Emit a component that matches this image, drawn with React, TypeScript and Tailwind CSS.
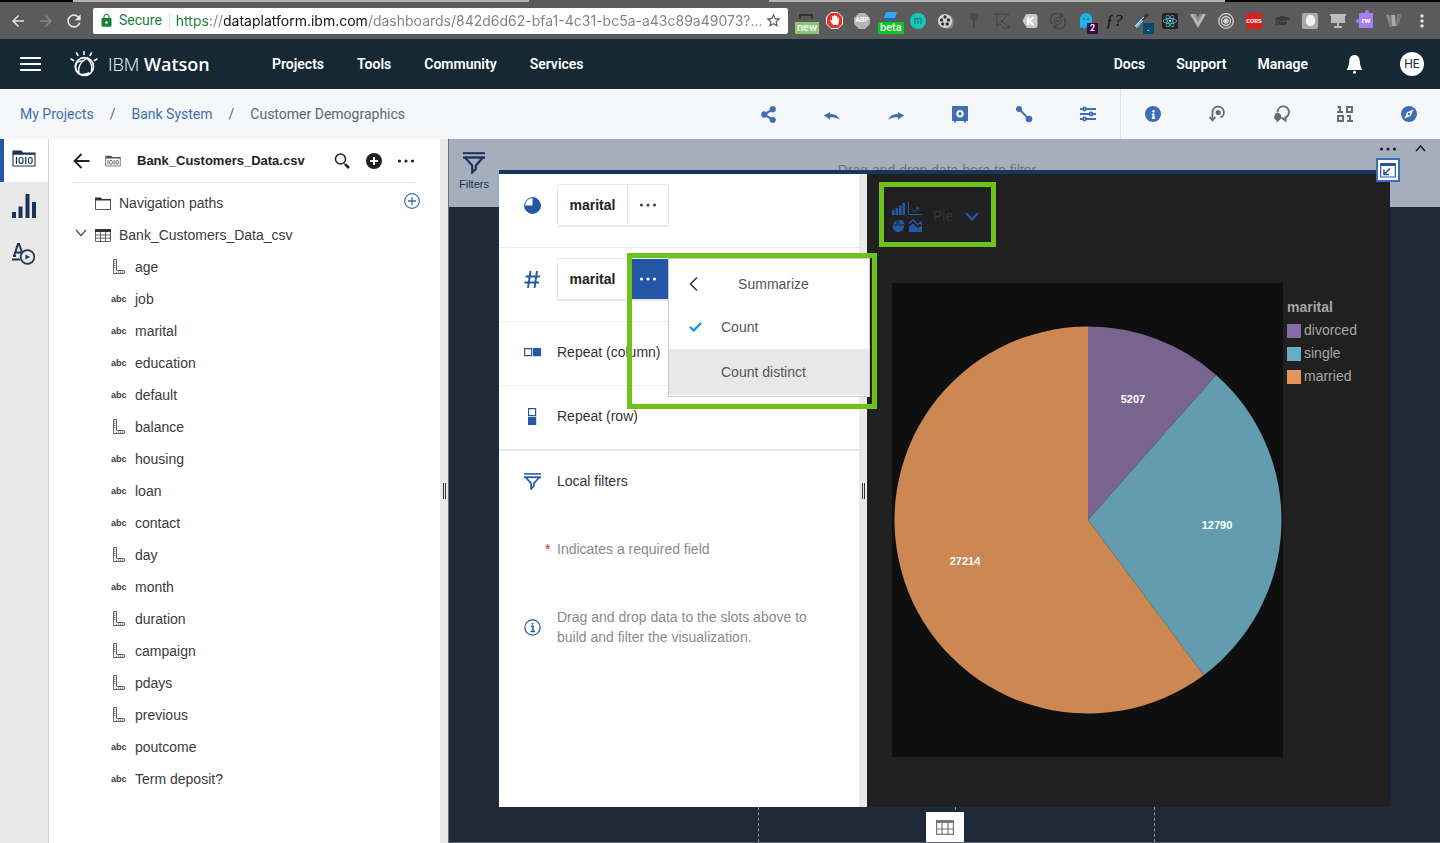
import React from "react";
import {
  FaReact,
  FaHandPaper,
  FaGhost,
  FaGraduationCap,
  FaShareAlt,
  FaInfo,
} from "react-icons/fa";
import { MdArrowBack, MdArrowForward, MdRefresh, MdLock, MdStarBorder, MdMoreVert } from "react-icons/md";

const SANS = "font-['Liberation_Sans',Arial,sans-serif]";

function Dots({ className = "" }: { className?: string }) {
  return (
    <svg width="18" height="4" viewBox="0 0 18 4" fill="currentColor" className={className} aria-hidden="true">
      <circle cx="2.5" cy="2" r="1.6" />
      <circle cx="9" cy="2" r="1.6" />
      <circle cx="15.5" cy="2" r="1.6" />
    </svg>
  );
}

/* ---------- Browser bar ---------- */

function Badge({ children, className }: { children: React.ReactNode; className: string }) {
  return (
    <span className={`absolute font-['Roboto',sans-serif] font-medium leading-none text-white ${className}`}>{children}</span>
  );
}

const extensions: { name: string; icon: React.ReactNode }[] = [
  {
    name: "Capture",
    icon: (
      <>
        <svg width="18" height="16" viewBox="0 0 18 16" fill="none" className="-mt-1">
          <path d="M1 4V1h3M14 1h3v3" stroke="#3f8f3a" />
          <path d="M3 8V4h12v4" stroke="#333" strokeWidth="2" />
        </svg>
        <Badge className="top-[20px] left-[3px] bg-[#8cc672] px-0.5 pb-px text-[11px]">new</Badge>
      </>
    ),
  },
  {
    name: "AdBlock",
    icon: (
      <svg width="17" height="17" viewBox="0 0 17 17">
        <path d="M5 .5h7L16.500 5v7L12 16.500H5L.5 12V5z" fill="#e2352c" stroke="#eee" />
        <svg x="3.500" y="3" width="10" height="11"><FaHandPaper size={10} color="#fff" /></svg>
      </svg>
    ),
  },
  {
    name: "Adblock Plus",
    icon: (
      <span className="relative flex size-4 items-center justify-center font-['Roboto',sans-serif] text-[7px] font-bold text-white">
        <svg width="16" height="16" viewBox="0 0 16 16" className="absolute inset-0"><path d="M5 0h6l5 5v6l-5 5H5l-5-5V5z" fill="#b5b5b5" /></svg>
        <span className="relative">ABP</span>
      </span>
    ),
  },
  {
    name: "Page tools",
    icon: (
      <>
        <svg width="16" height="12" viewBox="0 0 16 12" className="-mt-2">
          <path d="M4 1h11l-2 6H2z" fill="#35a6f2" />
          <path d="M2 7h11l-1 3H3z" fill="#1f6fb5" />
        </svg>
        <Badge className="top-[20px] left-0.5 bg-[#0ac41f] px-0.5 pb-px text-[11px]">beta</Badge>
      </>
    ),
  },
  {
    name: "Momentum",
    icon: (
      <span className="flex size-4 items-center justify-center rounded-full bg-[#15c7b8] text-[10px] leading-none text-[#0b6f68]">m</span>
    ),
  },
  {
    name: "Film",
    icon: (
      <svg width="18" height="18" viewBox="0 0 18 18">
        <ellipse cx="11" cy="10" rx="6" ry="7" fill="#888" />
        <circle cx="8" cy="9" r="7" fill="#d6d6d6" />
        <g fill="#333">
          <circle cx="8" cy="5" r="1.700" />
          <circle cx="11.500" cy="8" r="1.700" />
          <circle cx="10.300" cy="12" r="1.700" />
          <circle cx="5.700" cy="12" r="1.700" />
          <circle cx="4.500" cy="8" r="1.700" />
        </g>
      </svg>
    ),
  },
  {
    name: "Pin",
    icon: (
      <svg width="16" height="18" viewBox="0 0 16 18">
        <circle cx="8" cy="5" r="4" fill="#494949" />
        <path d="M8 8v8" stroke="#494949" strokeWidth="2" />
      </svg>
    ),
  },
  {
    name: "Kaspersky",
    icon: (
      <svg width="18" height="18" viewBox="0 0 18 18" fill="none" stroke="#434343">
        <path d="M1 2h15L5 13M4 2v12M8 8l7 7M6 11l5 5h5v-3" />
      </svg>
    ),
  },
  {
    name: "Keep",
    icon: (
      <svg width="16" height="16" viewBox="0 0 16 16">
        <path d="M4 1h9a2.500 2.500 0 0 1 2.500 2.500v9A2.500 2.500 0 0 1 13 15H5L.5 8z" fill="#c9c9c9" />
        <path d="M6 4v8M11.500 4L7 8l4.500 4" stroke="#fff" strokeWidth="2" fill="none" />
      </svg>
    ),
  },
  {
    name: "Reload",
    icon: (
      <svg width="16" height="16" viewBox="0 0 16 16" fill="none" stroke="#444">
        <path d="M2 11A6.500 6.500 0 0 1 12 2.500M14 5a6.500 6.500 0 0 1-10 8.500M12 .5v3H9M4 15.500v-3h3" strokeWidth="1.500" />
        <circle cx="8" cy="8" r="3.500" />
        <circle cx="8" cy="8" r="1" />
      </svg>
    ),
  },
  {
    name: "Ghostery",
    icon: (
      <>
        <FaGhost size={16} color="#19b3f0" />
        <Badge className="top-[21px] left-[15px] bg-[#3f0a45] px-[3px] py-px text-[9px]">2</Badge>
      </>
    ),
  },
  {
    name: "Font finder",
    icon: <span className="font-['Liberation_Serif',serif] text-[17px] leading-none text-[#111] italic">ƒ?</span>,
  },
  {
    name: "Color picker",
    icon: (
      <>
        <svg width="16" height="16" viewBox="0 0 16 16">
          <path d="M2 14L9 6" stroke="#6cc5ef" strokeWidth="3" />
          <path d="M8 7l6-6" stroke="#2f3a40" strokeWidth="3" />
          <path d="M1 13L10 4" stroke="#ddd" />
        </svg>
        <Badge className="top-[21px] left-[15px] bg-[#054a6d] px-1 py-px text-[9px]">.</Badge>
      </>
    ),
  },
  {
    name: "React developer tools",
    icon: (
      <span className="flex size-4 items-center justify-center rounded-xs bg-[#222]">
        <FaReact size={14} color="#62d3f3" />
      </span>
    ),
  },
  {
    name: "Vue developer tools",
    icon: (
      <svg width="16" height="14" viewBox="0 0 16 14">
        <path d="M0 0h6l2 4 2-4h6L8 14z" fill="#b5b5b5" />
        <path d="M3.500 0H6l2 4 2-4h2.500L8 8z" fill="#8b8b8b" />
      </svg>
    ),
  },
  {
    name: "Target",
    icon: (
      <svg width="16" height="16" viewBox="0 0 16 16" fill="none" stroke="#d0d0d0">
        <circle cx="8" cy="8" r="7.300" strokeWidth="1.300" />
        <circle cx="8" cy="8" r="4.500" strokeWidth="1.300" />
        <circle cx="8" cy="8" r="2.300" fill="#d0d0d0" />
      </svg>
    ),
  },
  {
    name: "CORS",
    icon: (
      <span className="flex size-4 items-center justify-center rounded-xs bg-[#d6211c] font-['Roboto',sans-serif] text-[6px] font-bold text-white">
        CORS
      </span>
    ),
  },
  { name: "Academy", icon: <FaGraduationCap size={15} color="#3d3931" /> },
  {
    name: "Pearl",
    icon: (
      <span className="flex size-4 items-center justify-center rounded-xs bg-[#aaa]">
        <span className="h-[11px] w-[9px] rounded-full bg-[#f2f2f2]" />
      </span>
    ),
  },
  {
    name: "Presenter",
    icon: (
      <svg width="16" height="16" viewBox="0 0 16 16" fill="#bcbcbc">
        <path d="M0 1h16v2H0zM1 3h14v7H1zM7 10h2v3h3v2H4v-2h3z" />
      </svg>
    ),
  },
  {
    name: "RW",
    icon: (
      <span className="relative flex h-[15px] w-3.5 items-center justify-center bg-[#a87cf8] font-['Roboto',sans-serif] text-[8px] font-bold text-white">
        <span className="absolute -top-[3px] left-1.5 size-1 rounded-full bg-[#a87cf8]" />
        <span className="absolute top-1.5 -left-[3px] size-1 rounded-full bg-[#a87cf8]" />
        rw
      </span>
    ),
  },
  {
    name: "Web archive",
    icon: (
      <svg width="16" height="14" viewBox="0 0 16 14">
        <path d="M0 1h4l2 12H4z" fill="#888" />
        <path d="M5 1h4l1 11H6z" fill="#aaa" />
        <path d="M11 0h5l-4 12h-2z" fill="#7b7b7b" />
      </svg>
    ),
  },
];

const urlText = "https://dataplatform.ibm.com/dashboards/842d6d62-bfa1-4c31-bc5a-a43c89a49073?...";

function BrowserBar() {
  return (
    <div className="bg-[#5b5b5b]">
      <div className="flex h-0.5">
        <div className="w-[73px] bg-black" />
        <div className="flex-1 bg-[#b5b5b5]" />
        <div className="w-60 bg-[#5b5b5b]" />
        <div className="flex-1 bg-[#b5b5b5]" />
        <div className="w-[215px] bg-black" />
      </div>
      <div className="flex h-[37px] items-center pr-1 pl-[9px]">
        <button aria-label="Back" className="mr-[10px] text-[#e4e4e4]"><MdArrowBack size={18} /></button>
        <button aria-label="Forward" className="mr-[9px] text-[#868686]"><MdArrowForward size={18} /></button>
        <button aria-label="Reload" className="mr-[9px] text-[#e4e4e4]"><MdRefresh size={20} /></button>
        <div className="flex h-[26px] min-w-0 flex-1 items-center rounded-xs bg-white pl-1.5 font-['Roboto',sans-serif] text-[14px]">
          <MdLock size={15} color="#188038" />
          <span className="ml-[5px] text-[#188038]">Secure</span>
          <span className="mr-1.5 ml-[7px] h-4 w-px bg-[#ddd]" />
          <input
            aria-label="Address"
            readOnly
            value={urlText}
            className="min-w-0 flex-1 bg-[linear-gradient(90deg,#188038_35px,#808080_35px,#808080_48px,#111_48px,#111_192px,#808080_192px)] bg-clip-text font-['Inter',sans-serif] text-[14px] text-transparent outline-none"
          />
          <button aria-label="Bookmark" className="mr-1.5 text-[#555]"><MdStarBorder size={17} /></button>
        </div>
        <div className="ml-1 flex">
          {extensions.map((e) => (
            <button key={e.name} aria-label={e.name} className="relative flex h-[37px] w-7 items-center justify-center">
              {e.icon}
            </button>
          ))}
          <button aria-label="Menu" className="flex w-7 items-center justify-center text-[#e4e4e4]"><MdMoreVert size={20} /></button>
        </div>
      </div>
    </div>
  );
}

/* ---------- Watson header ---------- */

function WatsonLogo() {
  return (
    <svg width="28" height="28" viewBox="0 0 28 28" fill="none" stroke="#fff" strokeLinecap="round" aria-hidden="true">
      <path d="M14 1.500v3M6.500 3l1.500 2.500M21.500 3L20 5.500M1 9l2.500 1.500M27 9l-2.500 1.500" strokeWidth="1.500" />
      <circle cx="14.500" cy="16.500" r="9" strokeWidth="1.600" />
      <path d="M11.500 8.500C17 6 23 12 21.500 21.500M17.500 8C10 12 7.500 18 9 24M5.500 20c3 5.500 9 5 13.500 3M6.500 21C3.500 15.500 6 11 12 11" strokeWidth="1.400" />
    </svg>
  );
}

const navClass = "hover:underline";

function Header() {
  return (
    <header className="flex h-[50px] items-center bg-[#152934] pr-4 pl-5 font-['Roboto',sans-serif] text-[14px] font-semibold text-white">
      <button aria-label="Menu" className="flex w-[21px] flex-col gap-1">
        <span className="h-0.5 bg-white" />
        <span className="h-0.5 bg-white" />
        <span className="h-0.5 bg-white" />
      </button>
      <a href="#home" className="ml-[29px] flex w-[202px] items-center gap-[10px] font-['Open_Sans',sans-serif] text-[18px]">
        <WatsonLogo />
        <span><span className="font-light">IBM</span> Watson</span>
      </a>
      <nav className="flex flex-1 gap-[33px]">
        <a className={navClass} href="#projects">Projects</a>
        <a className={navClass} href="#tools">Tools</a>
        <a className={navClass} href="#community">Community</a>
        <a className={navClass} href="#services">Services</a>
      </nav>
      <nav className="flex items-center gap-[31px]">
        <a className={navClass} href="#docs">Docs</a>
        <a className={navClass} href="#support">Support</a>
        <a className={navClass} href="#manage">Manage</a>
      </nav>
      <button aria-label="Notifications" className="ml-[38px]">
        <svg width="17" height="19" viewBox="0 0 17 19" fill="#fff">
          <path d="M8.500 0c3.300 0 5 2.500 5.200 5.500C14 10 14.500 12 16.500 15H.5C2.500 12 3 10 3.300 5.500 3.500 2.500 5.200 0 8.500 0z" />
          <circle cx="8.500" cy="17.300" r="1.500" />
        </svg>
      </button>
      <button className="ml-[37px] flex size-6 items-center justify-center rounded-full bg-white text-[12px] font-normal text-[#152934]">
        HE
      </button>
    </header>
  );
}

/* ---------- Breadcrumb and toolbar ---------- */

function ToolButton({ label, children, muted = false }: { label: string; children: React.ReactNode; muted?: boolean }) {
  return (
    <button aria-label={label} className={`flex w-16 items-center justify-center ${muted ? "text-[#5f6d6d]" : "text-[#3d70b2]"}`}>
      {children}
    </button>
  );
}

function Toolbar() {
  return (
    <div className="flex h-[50px] overflow-hidden bg-[#f5f7fa]">
      <nav aria-label="Breadcrumb" className="flex flex-1 items-center gap-4 pl-5 font-['Roboto',sans-serif] text-[14px] text-[#5a6872]">
        <a href="#my-projects" className="text-[#3d70b2]">My Projects</a>
        <span>/</span>
        <a href="#bank-system" className="text-[#3d70b2]">Bank System</a>
        <span>/</span>
        <span>Customer Demographics</span>
      </nav>
      <div className="flex border-r border-[#dfe3e6]">
        <ToolButton label="Share"><FaShareAlt size={17} /></ToolButton>
        <ToolButton label="Undo">
          <svg width="16" height="16" viewBox="0 0 16 16" fill="currentColor"><path d="M0 9.500L6 6v2c5 0 8.500 2 9.700 6C13.500 12 11 11.200 6 11.200V13.500z" /></svg>
        </ToolButton>
        <ToolButton label="Redo">
          <svg width="16" height="16" viewBox="0 0 16 16" fill="currentColor"><path d="M16 9.500L10 6v2C5 8 1.500 10 .3 14 2.500 12 5 11.200 10 11.200V13.500z" /></svg>
        </ToolButton>
        <ToolButton label="Save">
          <svg width="18" height="18" viewBox="0 0 18 18" fill="currentColor"><path fillRule="evenodd" d="M1 1h16v15h-2v1.500h-2V16H5v1.500H3V16H1zm8 4a3.700 3.700 0 1 0 0 7.400A3.700 3.700 0 0 0 9 5zm0 2a1.700 1.700 0 1 1 0 3.400A1.700 1.700 0 0 1 9 7z" /></svg>
        </ToolButton>
        <ToolButton label="Connections">
          <svg width="18" height="18" viewBox="0 0 18 18" fill="currentColor"><circle cx="4" cy="4" r="3" /><circle cx="14" cy="14" r="3.300" /><path d="M4 4l10 10" stroke="currentColor" strokeWidth="1.800" /></svg>
        </ToolButton>
        <ToolButton label="Properties">
          <svg width="18" height="16" viewBox="0 0 18 16" fill="none" stroke="currentColor" strokeWidth="1.800">
            <path d="M1 3h3M7 3h10M1 8h9M14 8h3M1 13h3M7 13h10" />
            <circle cx="5.500" cy="3" r="1.500" /><circle cx="12" cy="8" r="1.500" /><circle cx="5.500" cy="13" r="1.500" />
          </svg>
        </ToolButton>
      </div>
      <div className="-mr-px flex">
        <ToolButton label="Information">
          <span className="flex size-4 items-center justify-center rounded-full bg-[#3d70b2] text-white"><FaInfo size={9} /></span>
        </ToolButton>
        <ToolButton label="History" muted>
          <svg width="18" height="18" viewBox="0 0 18 18" fill="none" stroke="currentColor" strokeWidth="1.800">
            <path d="M4.500 15V7.500a5.700 5.700 0 1 1 8 5" /><path d="M1.500 12l3 3.300 3-3.300" /><circle cx="10.200" cy="7.500" r="2.600" fill="currentColor" stroke="none" />
          </svg>
        </ToolButton>
        <ToolButton label="Comments" muted>
          <svg width="18" height="18" viewBox="0 0 18 18">
            <path d="M5.500 7a5.700 5.700 0 1 1 8 5.300v3.200l-4-3" fill="none" stroke="currentColor" strokeWidth="1.900" />
            <path d="M5.500 7.500a4.300 4.300 0 0 1 1.500 8L4.500 17.500V15.500A4.300 4.300 0 0 1 5.500 7.500z" fill="currentColor" />
          </svg>
        </ToolButton>
        <ToolButton label="Data" muted>
          <svg width="18" height="18" viewBox="0 0 18 18" fill="none" stroke="currentColor" strokeWidth="1.900">
            <path d="M1.500 2H4v5M1 7h6M11 2h5v5h-5zM2 11h5v5H2zM11 11h3v5M11 16h6" />
          </svg>
        </ToolButton>
        <ToolButton label="Explore">
          <svg width="16" height="16" viewBox="0 0 16 16">
            <circle cx="8" cy="8" r="8" fill="currentColor" /><path d="M12.500 3.500L9.800 9.800 3.500 12.500 6.200 6.200z" fill="#fff" /><circle cx="8" cy="8" r="1.200" fill="currentColor" />
          </svg>
        </ToolButton>
      </div>
    </div>
  );
}

/* ---------- Left side ---------- */

function DataIcon({ width, height, color }: { width: number; height: number; color: string }) {
  return (
    <svg width={width} height={height} viewBox="0 0 24 17" fill="none" stroke={color} aria-hidden="true">
      <path d="M1 4h22v12H1z" strokeWidth="1.100" />
      <path d="M.5.500h9l1.500 2h12.500v2H.5z" fill={color} stroke="none" />
      <path d="M4.500 7v7M13.700 7v7" strokeWidth="1.300" />
      <rect x="7" y="7.500" width="4" height="6" rx="2" strokeWidth="1.200" />
      <rect x="16.500" y="7.500" width="3.600" height="6" rx="1.800" strokeWidth="1.200" />
    </svg>
  );
}

function Rail() {
  return (
    <nav aria-label="Tools" className="flex w-[49px] flex-col border-r border-[#d4d4d4] bg-[#e9e9e9]">
      <button aria-label="Data" className="flex h-[43px] items-center border-l-4 border-[#2458a6] bg-white pb-1 pl-2 text-left">
        <DataIcon width={24} height={17} color="#1d3458" />
      </button>
      <button aria-label="Visualizations" className="flex h-12 items-center justify-center">
        <svg width="24" height="24" viewBox="0 0 24 24" fill="#1d3458"><path d="M0 18h4v6H0zM6.500 12.500h4V24h-4zM13.500 0h4v24h-4zM20 8h4v16h-4z" /></svg>
      </button>
      <button aria-label="Widgets" className="flex h-12 items-center justify-center">
        <svg width="24" height="22" viewBox="0 0 24 22" fill="none" stroke="#1d3458" strokeWidth="2">
          <path d="M2 13L6 1h1l3 8M4 9.500h5M0 16.500h8M1 13h3" />
          <circle cx="15.500" cy="14" r="6.800" strokeWidth="1.700" />
          <path d="M13.500 11.500v5l4.500-2.500z" fill="#1d3458" stroke="none" />
        </svg>
      </button>
    </nav>
  );
}

const columns: [string, "number" | "text"][] = [
  ["age", "number"],
  ["job", "text"],
  ["marital", "text"],
  ["education", "text"],
  ["default", "text"],
  ["balance", "number"],
  ["housing", "text"],
  ["loan", "text"],
  ["contact", "text"],
  ["day", "number"],
  ["month", "text"],
  ["duration", "number"],
  ["campaign", "number"],
  ["pdays", "number"],
  ["previous", "number"],
  ["poutcome", "text"],
  ["Term deposit?", "text"],
];

function Ruler() {
  return (
    <svg width="14" height="16" viewBox="0 0 14 16" fill="none" stroke="#666" className="ml-px" aria-hidden="true">
      <path d="M1.500.500h3v11h8v3h-11z" />
      <path d="M2 2.500h1.500M2 4.500h1.500M2 6.500h1.500M2 8.500h1.500M4.500 14v-1.500M6.500 14v-1.500M8.500 14v-1.500M10.500 14v-1.500" strokeWidth=".8" />
    </svg>
  );
}

function DataPanel() {
  return (
    <section className="flex w-[391px] flex-col bg-white pr-[25px] pl-6 text-[14px] text-[#3a3a3a]">
      <div className="flex h-[44px] items-center border-b border-[#e2e2e2]">
        <button aria-label="Back" className="w-8">
          <svg width="17" height="16" viewBox="0 0 17 16" fill="none" stroke="#222" strokeWidth="1.800"><path d="M16.500 8H2M8.500 1L1.500 8l7 7" /></svg>
        </button>
        <DataIcon width={16} height={12} color="#555" />
        <h2 className="ml-4 flex-1 text-[13px] font-bold text-[#222]">Bank_Customers_Data.csv</h2>
        <button aria-label="Search">
          <svg width="16" height="16" viewBox="0 0 16 16" fill="none" stroke="#222"><circle cx="6.500" cy="6" r="5" strokeWidth="1.500" /><path d="M10.500 10.500l1 1" strokeWidth="1.500" /><path d="M11.300 11.300l3.700 3.700" strokeWidth="2.600" /></svg>
        </button>
        <button aria-label="Add" className="ml-4">
          <svg width="16" height="16" viewBox="0 0 16 16"><circle cx="8" cy="8" r="8" fill="#222" /><path d="M8 4v8M4 8h8" stroke="#fff" strokeWidth="2" /></svg>
        </button>
        <button aria-label="More" className="ml-[15px] text-[#222]"><Dots /></button>
      </div>
      <div className="mt-1 flex h-8 items-center pl-[22px]">
        <svg width="16" height="13" viewBox="0 0 16 13" fill="none" stroke="#555"><path d="M.5 2.500h15v10H.5z" /><path d="M0 .5h6l1 1.500h9v1.500H0z" fill="#333" stroke="none" /></svg>
        <span className="ml-2 flex-1">Navigation paths</span>
        <button aria-label="Add navigation path" className="-mr-[5px] mb-1">
          <svg width="16" height="16" viewBox="0 0 16 16" fill="none" stroke="#3d70b2"><circle cx="8" cy="8" r="7.300" strokeWidth="1.200" /><path d="M8 4v8M4 8h8" strokeWidth="1.300" /></svg>
        </button>
      </div>
      <div className="flex h-8 items-center pl-0.5">
        <button aria-label="Collapse" className="mb-1 w-5">
          <svg width="12" height="8" viewBox="0 0 12 8" fill="none" stroke="#555" strokeWidth="1.400"><path d="M1 1l5 5.500L11 1" /></svg>
        </button>
        <svg width="16" height="13" viewBox="0 0 16 13" fill="none" stroke="#555"><path d="M.5.500h15v12H.5zM0 6h16M0 9.200h16M5.500 3v10M10.500 3v10" strokeWidth=".9" /><path d="M0 0h16v3H0z" fill="#333" stroke="none" /></svg>
        <span className="ml-2">Bank_Customers_Data_csv</span>
      </div>
      <ul className="pb-8">
        {columns.map(([name, type]) => (
          <li key={name} className="flex h-8 items-center pl-[38px]">
            <span className="flex w-6 text-[9px] leading-4 font-bold">{type === "number" ? <Ruler /> : "abc"}</span>
            <span>{name}</span>
          </li>
        ))}
      </ul>
    </section>
  );
}

function Splitter() {
  return (
    <div role="separator" aria-orientation="vertical" className="flex w-2 items-center justify-center gap-px bg-[#e9e9e9]">
      <span className="h-4 w-px bg-[#333]" />
      <span className="h-4 w-px bg-[#333]" />
    </div>
  );
}

/* ---------- Canvas ---------- */

function FilterIcon({ size, color }: { size: number; color: string }) {
  return (
    <svg width={size} height={size} viewBox="0 0 22 22" fill="none" stroke={color} aria-hidden="true">
      <path d="M0 1.200h22" strokeWidth="2" />
      <path d="M0 5.500h22" strokeWidth="2.400" />
      <path d="M2 5.500l7.200 8v7l3.600-3.500v-3.500l7.200-8" strokeWidth="2.200" />
    </svg>
  );
}

function SlotChip({ active = false }: { active?: boolean }) {
  return (
    <div className="flex h-[43px] w-28 rounded-xs border border-b-2 border-[#e8e9ec] text-[14px] font-bold text-[#222]">
      <button className="flex-1">marital</button>
      <button
        aria-label="More options"
        className={`flex w-[41px] items-center justify-center border-l border-[#e8e9ec] ${active ? "bg-[#2458a6] text-white" : "text-[#444]"}`}
      >
        <Dots />
      </button>
    </div>
  );
}

function SlotRow({ icon, children, className }: { icon: React.ReactNode; children: React.ReactNode; className: string }) {
  return (
    <div className={`flex ${className}`}>
      <span className="flex w-[58px] shrink-0 items-center pl-[25px]">{icon}</span>
      <div className="flex items-center">{children}</div>
    </div>
  );
}

function Slots() {
  return (
    <section className="relative w-[360px] bg-white text-[14px] text-[#333]">
      <SlotRow
        className="h-[74px] border-b border-[#ebebeb] pb-[10px]"
        icon={<svg width="17" height="17" viewBox="0 0 17 17"><circle cx="8.500" cy="8.500" r="7.800" fill="#fff" stroke="#2458a6" /><path d="M8.500 8.500V.2A8.300 8.300 0 1 1 .2 8.500z" fill="#2458a6" /></svg>}
      >
        <SlotChip />
      </SlotRow>
      <SlotRow
        className="h-[74px] border-b border-[#ebebeb] pb-[10px]"
        icon={<svg width="17" height="17" viewBox="0 0 17 17" fill="none" stroke="#2458a6" strokeWidth="1.900"><path d="M6.500 0l-2.500 17M13 0l-2.500 17M1.500 5.500H16M.5 11.500H15" /></svg>}
      >
        <SlotChip active />
      </SlotRow>
      <SlotRow
        className="h-16 border-b border-[#ebebeb] pb-0.5"
        icon={<svg width="17" height="9" viewBox="0 0 17 9"><path d="M.6.600h7v7h-7z" fill="none" stroke="#2458a6" strokeWidth="1.200" /><path d="M9 0h8v8.200H9z" fill="#2458a6" /></svg>}
      >
        Repeat (column)
      </SlotRow>
      <SlotRow
        className="h-[65px] border-b-2 border-[#e6e6e6] pb-0.5"
        icon={<svg width="17" height="17" viewBox="0 0 17 17"><path d="M4.600.600h7v7h-7z" fill="none" stroke="#2458a6" strokeWidth="1.200" /><path d="M4 9h8.200v8H4z" fill="#2458a6" /></svg>}
      >
        Repeat (row)
      </SlotRow>
      <SlotRow className="h-[60px]" icon={<FilterIcon size={17} color="#2458a6" />}>
        Local filters
      </SlotRow>
      <p className="mt-7 flex h-5 items-center pl-[46px] text-[#8a8a8a]">
        <span className="w-3 text-[14px] text-[#e0182d]">*</span>
        Indicates a required field
      </p>
      <div className="mt-12 flex items-center pr-8 pl-[25px] text-[#8a8a8a]">
        <svg width="17" height="17" viewBox="0 0 17 17" fill="none" stroke="#2458a6" className="mr-4 shrink-0">
          <circle cx="8.500" cy="8.500" r="7.700" strokeWidth="1.200" />
          <path d="M7 7.300h2v5M6.500 12.400h4.500" strokeWidth="1.500" />
          <circle cx="8.500" cy="4.700" r="1" fill="#2458a6" stroke="none" />
        </svg>
        <p className="leading-5">Drag and drop data to the slots above to build and filter the visualization.</p>
      </div>

      <div role="menu" className="absolute top-[84px] left-[169px] z-10 w-[202px] border border-[#ccc] bg-white pb-px text-[#555]">
        <div className="flex h-[48px] items-center pt-0.5 pl-5">
          <button aria-label="Back">
            <svg width="9" height="14" viewBox="0 0 9 14" fill="none" stroke="#333" strokeWidth="1.500"><path d="M8 .5L1.500 7 8 13.500" /></svg>
          </button>
          <span className="flex-1 pr-5 text-center">Summarize</span>
        </div>
        <button role="menuitem" className="flex h-[42px] w-full items-center pb-0.5 pl-5">
          <svg width="13" height="10" viewBox="0 0 13 10" fill="none" stroke="#1192e8" strokeWidth="2.300" className="mr-[19px]"><path d="M1 5l3.700 3.500L12 1" /></svg>
          Count
        </button>
        <button role="menuitem" className="flex h-[46px] w-full items-center bg-[#e8e8e8] pl-[52px]">Count distinct</button>
      </div>
      <div className="pointer-events-none absolute top-[79px] left-32 z-10 h-[156px] w-[250px] border-[5px] border-[#6dc21c]" />
    </section>
  );
}

const slices = [
  { label: "divorced", value: 5207, fill: "#78648f", swatch: "bg-[#866ca5]", x: 241, y: 120 },
  { label: "single", value: 12790, fill: "#629cae", swatch: "bg-[#68adc2]", x: 325, y: 246 },
  { label: "married", value: 27214, fill: "#cc8752", swatch: "bg-[#e3965b]", x: 73, y: 282 },
];

function PieChart() {
  const total = slices.reduce((sum, s) => sum + s.value, 0);
  const cx = 196;
  const cy = 237;
  const r = 193.5;
  const point = (t: number) => `${cx + r * Math.sin(t)} ${cy - r * Math.cos(t)}`;
  let start = 0;
  return (
    <svg viewBox="0 0 391 474" className="size-full" role="img" aria-label="Customers by marital status">
      {slices.map((s) => {
        const end = start + (s.value / total) * 2 * Math.PI;
        const d = `M${cx} ${cy}L${point(start)}A${r} ${r} 0 ${end - start > Math.PI ? 1 : 0} 1 ${point(end)}Z`;
        start = end;
        return <path key={s.label} d={d} fill={s.fill} />;
      })}
      {slices.map((s) => (
        <text key={s.label} x={s.x} y={s.y} textAnchor="middle" fill="#fff" className="text-[11px] font-bold">
          {s.value}
        </text>
      ))}
    </svg>
  );
}

function Visualization() {
  return (
    <section className="flex flex-1 flex-col bg-[#202020] pb-[50px] pl-3 text-[14px]">
      <div className="h-[109px] pt-2">
        <button className="flex h-[65px] w-[117px] items-center border-[5px] border-[#6dc21c] pt-1 pl-2 text-[#363636]">
          <svg width="30" height="30" viewBox="0 0 30 30" fill="#2458a6">
            <path d="M0 8h2.800v5H0zM3.600 6h2.600v7H3.600zM7 3.500h2.600V13H7zM10.400 1H13v12h-2.600z" />
            <path d="M16.500 0v12.500H30M19.500 7l3 3 3.500-3.500 1.500 1.500M24 6h3" fill="none" stroke="#2458a6" />
            <path d="M6.500 18v5.500H12A5.800 5.800 0 1 1 .5 23.500h5V18z" />
            <path d="M7.500 17.500a5.500 5.500 0 0 1 5 5h-5zM.8 22.500a5.500 5.500 0 0 1 3.700-4v4z" />
            <path d="M17 30v-5.500l4-3 4.500 4.500 4.500-2.500V30z" />
            <path d="M17 21.500l4-3.500 4.500 4.500L29.500 20v3" fill="none" stroke="#2458a6" strokeWidth="1.300" />
          </svg>
          <span className="ml-[11px]">Pie</span>
          <svg width="14" height="9" viewBox="0 0 14 9" fill="none" stroke="#2458a6" strokeWidth="2.300" className="ml-3"><path d="M1 1l6 6.500L13 1" /></svg>
        </button>
      </div>
      <div className="flex min-h-0 flex-1 pl-[13px]">
        <div className="relative flex-1 bg-[#0f0f0f]">
          <div className="absolute inset-0"><PieChart /></div>
        </div>
        <div className="w-[107px] pt-[13px] pl-1 text-[#a6a6a6]">
          <h3 className="h-[23px] leading-[23px] font-bold">marital</h3>
          <ul>
            {slices.map((s) => (
              <li key={s.label} className="flex h-[23px] items-center gap-[3px]">
                <span className={`size-3.5 ${s.swatch}`} />
                {s.label}
              </li>
            ))}
          </ul>
        </div>
      </div>
    </section>
  );
}

const guides = ["left-[31.2%]", "left-[51.1%]", "left-[71.1%]"];

function Canvas() {
  return (
    <main className="relative flex min-w-0 flex-1 flex-col border-l border-[#6a6f78] bg-[#1f2937]">
      <div className="flex h-[68px] bg-[#a5aebc] text-[#1d3458]">
        <button className="flex w-[50px] flex-col items-center pt-[13px] text-[11px]">
          <FilterIcon size={22} color="#1d3458" />
          <span className="mt-0.5">Filters</span>
        </button>
        <p className="flex-1 pt-[23px] pr-1 text-center text-[14px] leading-4 text-[#6b7584]">Drag and drop data here to filter</p>
        <div className="flex items-start gap-[18px] pt-1.5 pr-3.5 text-[#16202e]">
          <button aria-label="More"><Dots className="h-2" /></button>
          <button aria-label="Collapse filters">
            <svg width="11" height="7" viewBox="0 0 11 7" fill="none" stroke="currentColor" strokeWidth="1.600"><path d="M1 6l4.500-5L10 6" /></svg>
          </button>
        </div>
      </div>
      <div className="flex-1" />
      <div className="relative flex h-9 items-end justify-center border-b border-[#5b6470]">
        {guides.map((g) => (
          <span key={g} className={`absolute inset-y-0 border-l border-dashed border-[#8d95a1] ${g}`} />
        ))}
        <button aria-label="Show data grid" className="relative flex h-[30px] w-[38px] items-center justify-center bg-white">
          <svg width="18" height="15" viewBox="0 0 18 15" fill="none" stroke="#777"><path d="M.6.600h16.800v13.800H.6zM0 9h18M6 3v12M12 3v12" strokeWidth="1.200" /><path d="M0 0h18v3H0z" fill="#777" stroke="none" /></svg>
        </button>
      </div>

      <div role="dialog" aria-label="Edit visualization" className="absolute inset-x-[50px] top-[31px] bottom-9 flex border-t-4 border-[#1b365d]">
        <Slots />
        <Splitter />
        <Visualization />
        <button aria-label="Collapse editor" className="absolute -top-4 -right-[10px] flex size-6 items-center justify-center border-2 border-[#3d70b2] bg-white">
          <svg width="16" height="15" viewBox="0 0 16 15" fill="none" stroke="#2458a6"><path d="M.7 1h14.600v13H.7z" strokeWidth="1.200" /><path d="M.5 1.500h15" strokeWidth="3" /><path d="M10 5.500l-5.500 5.500M4 6.500v5h5" strokeWidth="1.600" /></svg>
        </button>
      </div>
    </main>
  );
}

export default function App() {
  return (
    <div className={`${SANS} flex min-h-screen flex-col`}>
      <BrowserBar />
      <Header />
      <Toolbar />
      <div className="flex flex-1">
        <Rail />
        <DataPanel />
        <Splitter />
        <Canvas />
      </div>
    </div>
  );
}
